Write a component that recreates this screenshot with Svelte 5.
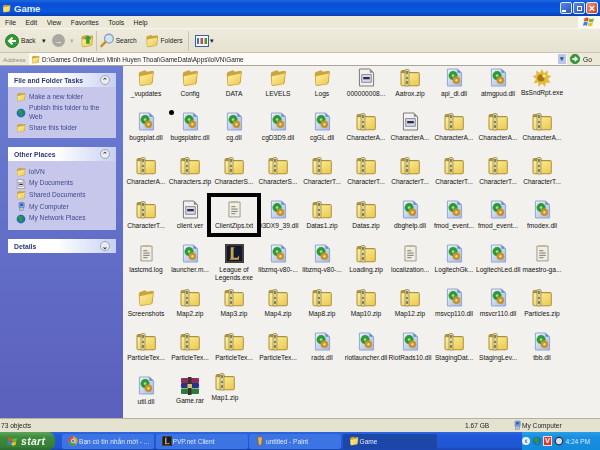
<script>
  const z = (n) => ({ n, t: 'zip' });
  const d = (n) => ({ n, t: 'dll' });
  const f = (n) => ({ n, t: 'folder' });
  const x = (n) => ({ n, t: 'txt' });
  const i = (n) => ({ n, t: 'ini' });
  const files = [
    f('_vupdates'), f('Config'), f('DATA'), f('LEVELS'), f('Logs'), i('000000008...'), z('Aatrox.zip'), d('api_dl.dll'), d('atmgpud.dll'), { n: 'BsSndRpt.exe', t: 'sun' },
    d('bugsplat.dll'), d('bugsplatrc.dll'), d('cg.dll'), d('cgD3D9.dll'), d('cgGL.dll'), z('CharacterA...'), i('CharacterA...'), z('CharacterA...'), z('CharacterA...'), z('CharacterA...'),
    z('CharacterA...'), z('Characters.zip'), z('CharacterS...'), z('CharacterS...'), z('CharacterT...'), z('CharacterT...'), z('CharacterT...'), z('CharacterT...'), z('CharacterT...'), z('CharacterT...'),
    z('CharacterT...'), i('client.ver'), x('ClientZips.txt'), d('D3DX9_39.dll'), z('Datas1.zip'), z('Datas.zip'), d('dbghelp.dll'), d('fmod_event...'), d('fmod_event...'), d('fmodex.dll'),
    x('lastcmd.log'), d('launcher.m...'), { n: 'League of Legends.exe', t: 'lol' }, d('libzmq-v80-...'), d('libzmq-v80-...'), z('Loading.zip'), x('localization...'), d('LogitechGk...'), d('LogitechLed.dll'), x('maestro-ga...'),
    f('Screenshots'), z('Map2.zip'), z('Map3.zip'), z('Map4.zip'), z('Map8.zip'), z('Map10.zip'), z('Map12.zip'), d('msvcp110.dll'), d('msvcr110.dll'), z('Particles.zip'),
    z('ParticleTex...'), z('ParticleTex...'), z('ParticleTex...'), z('ParticleTex...'), d('rads.dll'), d('riotlauncher.dll'), d('RiotRads10.dll'), z('StagingDat...'), z('StagingLev...'), d('tbb.dll'),
    d('util.dll'), { n: 'Game.rar', t: 'rar' }, { n: 'Map1.zip', t: 'zip', up: true }
  ];
  const menus = ['File', 'Edit', 'View', 'Favorites', 'Tools', 'Help'];
  const tasks = [
    { n: 'Make a new folder', t: 'folder' },
    { n: 'Publish this folder to the Web', t: 'globe' },
    { n: 'Share this folder', t: 'folder' }
  ];
  const places = [
    { n: 'lolVN', t: 'folder' },
    { n: 'My Documents', t: 'ini' },
    { n: 'Shared Documents', t: 'folder' },
    { n: 'My Computer', t: 'pc' },
    { n: 'My Network Places', t: 'globe' }
  ];
</script>

<svg class="defs" width="0" height="0" aria-hidden="true">
  <defs>
    <linearGradient id="fy" x1="0" y1="0" x2="1" y2="1"><stop offset="0" stop-color="#fdf0a0"/><stop offset="1" stop-color="#ecc850"/></linearGradient>
    <linearGradient id="pg" x1="0" y1="0" x2="1" y2="1"><stop offset="0" stop-color="#eef2fb"/><stop offset="1" stop-color="#a5b8e2"/></linearGradient>
    <symbol id="folder" viewBox="0 0 20 20">
      <path d="M4 3 L9 1.500 L11 3 L17 2 Q19 2 18.700 4 L17.500 15 Q17.200 17 15 17.200 L5 18.800 Q2.500 18.800 2.500 16 L2 5.500 Q2 3.500 4 3Z" fill="#c9a53c"/>
      <path d="M3.200 8 L17.800 5 L16.300 15 Q16 16.500 14.600 16.600 L5 17.800 Q3.400 17.900 3.300 16Z" fill="url(#fy)"/>
    </symbol>
    <symbol id="zip" viewBox="0 0 20 18">
      <path d="M.5 3 Q.5 1 2.500 1 L8 1 L10 3 L18 3 Q19.800 3 19.800 5 L19.800 15.500 Q19.800 17.300 18 17.300 L2.500 17.300 Q.5 17.300 .5 15.500Z" fill="#a8923c"/>
      <path d="M1.500 4.200 L18.800 4.200 L18.800 16.300 L1.500 16.300Z" fill="url(#fy)"/>
      <rect x="5" y="0.500" width="4" height="16.500" rx="1" fill="#e0d498" stroke="#85783c" stroke-width=".6"/>
      <path d="M7 2 V5 M7 8 V10 M7 12 V15" stroke="#5c5534" stroke-width="1.300"/>
    </symbol>
    <symbol id="dll" viewBox="0 0 18 20">
      <path d="M1.500 1 L12 1 L16.500 5 L16.500 19 L1.500 19Z" fill="url(#pg)" stroke="#8ea3cf" stroke-width="1"/>
      <path d="M12 1 L12 5 L16.500 5Z" fill="#6d8cc8"/>
      <circle cx="7.500" cy="8" r="4.800" fill="#2f9a34"/>
      <circle cx="7.500" cy="8" r="1.400" fill="#9fe09a"/>
      <circle cx="11" cy="13" r="4" fill="#c6922c"/>
      <circle cx="11" cy="13" r="1.300" fill="#f3dc8c"/>
    </symbol>
    <symbol id="ini" viewBox="0 0 18 20">
      <path d="M1.500 1 L12.500 1 L16.500 5 L16.500 19 L1.500 19Z" fill="#f2f1ee" stroke="#77736e" stroke-width="1"/>
      <path d="M12.500 1 L12.500 5 L16.500 5Z" fill="#8d8b8a"/>
      <rect x="4" y="7" width="10" height="8" fill="#d8d9e8" stroke="#6a6a80" stroke-width=".8"/>
      <rect x="5.500" y="9.500" width="7" height="2.400" fill="#2b2b44"/>
    </symbol>
    <symbol id="txt" viewBox="0 0 14 18">
      <path d="M1 1 L13 1 L13 17 L1 17Z" fill="#f0eee2" stroke="#9b9788" stroke-width="1"/>
      <path d="M3 1 H11" stroke="#c3b690" stroke-width="2"/>
      <path d="M3.500 6 H8 M3.500 8.500 H10.500 M3.500 11 H10.500 M3.500 13.500 H8" stroke="#77746c" stroke-width="1"/>
    </symbol>
    <symbol id="sun" viewBox="0 0 20 20">
      <path d="M10 1 L12 5 L16 2.500 L15.500 7 L19.500 8 L16 11 L18.500 15 L14 14.500 L13 19 L10 15.500 L6.500 19 L6 14.500 L1.500 15.500 L4 11 L.5 8 L4.500 7 L4 2.500 L8 5Z" fill="#e3bb3c"/>
      <circle cx="9" cy="10" r="3.500" fill="#a9741c"/>
      <circle cx="12" cy="8" r="1.600" fill="#fff1a6"/>
    </symbol>
    <symbol id="lol" viewBox="0 0 20 20">
      <rect width="20" height="20" fill="#10192f"/>
      <rect x="1" y="1" width="18" height="18" fill="none" stroke="#7b6a37" stroke-width="1"/>
      <path d="M6 3.500 H10 L9 5 V14.500 H13 L15 12 L14.500 16.500 H4.500 L6 15 V5Z" fill="#c8a24c"/>
    </symbol>
    <symbol id="rar" viewBox="0 0 20 18">
      <rect x="1" y="1" width="18" height="5" rx="1" fill="#8a2f55"/>
      <rect x="1" y="6" width="18" height="5" rx="1" fill="#24338c"/>
      <rect x="1" y="11.500" width="18" height="5.500" rx="1" fill="#2e7a3c"/>
      <rect x="8" y="0" width="3.500" height="18" fill="#3b3124"/>
      <rect x="7.500" y="7" width="4.500" height="4" fill="#d8bf6a"/>
    </symbol>
    <symbol id="globe" viewBox="0 0 16 16">
      <circle cx="8" cy="8" r="7" fill="#1a6fbf"/>
      <path d="M4 3 Q8 2 11 4 L10 7 L11 11 L7 14 L6 9 L3 7Z" fill="#2f9a34"/>
    </symbol>
    <symbol id="pc" viewBox="0 0 16 16">
      <rect x="5" y="1" width="8" height="8" rx="1" fill="#8eb0e0" stroke="#4b6ba8"/>
      <rect x="6.500" y="2.500" width="5" height="4" fill="#2f62c8"/>
      <rect x="6" y="9" width="6" height="5" fill="#b9c2d8" stroke="#6a7898" stroke-width=".7"/>
    </symbol>
    <symbol id="flag" viewBox="0 0 16 16">
      <path d="M2 3 Q5 1 7.500 3 L6.500 7.500 Q4 6 1 7.500Z" fill="#e0532e"/>
      <path d="M8.300 3.300 Q11 5 14.500 3 L13.500 7.500 Q10.500 9 7.500 7.800Z" fill="#6dbb3c"/>
      <path d="M1 8.300 Q4 7 6.300 8.300 L5.300 13 Q3 11.500 0 13Z" fill="#3b7fe0"/>
      <path d="M7.300 8.700 Q10 10 13.300 8.300 L12.300 13 Q9.500 14.500 6.300 13Z" fill="#f2c02e"/>
    </symbol>
    <symbol id="go" viewBox="0 0 14 14">
      <circle cx="7" cy="7" r="6.500" fill="#2e9b33" stroke="#1c6a20" stroke-width=".8"/>
      <path d="M3 7 H9 M6.500 3.800 L10 7 L6.500 10.200" fill="none" stroke="#fff" stroke-width="2"/>
    </symbol>
  </defs>
</svg>

<div class="win">
  <header class="title">
    <svg class="ti"><use href="#folder"/></svg>
    <span class="tt">Game</span>
    <div class="wbtns">
      <span class="wb"><i class="min"></i></span>
      <span class="wb"><i class="max"></i></span>
      <span class="wb close">×</span>
    </div>
  </header>

  <nav class="menu">
    {#each menus as m}<span>{m}</span>{/each}
    <div class="logo"><svg><use href="#flag"/></svg></div>
  </nav>

  <div class="tools">
    <svg class="round" viewBox="0 0 14 14"><g transform="matrix(-1 0 0 1 14 0)"><circle cx="7" cy="7" r="6.500" fill="#2e9b33" stroke="#1c6a20" stroke-width=".8"/><path d="M3 7 H9 M6.500 3.800 L10 7 L6.500 10.200" fill="none" stroke="#fff" stroke-width="2"/></g></svg>
    <span class="tl">Back</span><span class="caret">▾</span>
    <span class="fwd">→</span>
    <span class="caret dim">▾</span>
    <svg class="up" viewBox="0 0 16 16">
      <use href="#folder" width="16" height="16"/>
      <path d="M9 1 L13.500 6 L11 6 L11 11 L7 11 L7 6 L4.500 6Z" fill="#38a030"/>
    </svg>
    <span class="sep"></span>
    <svg class="search" viewBox="0 0 16 16">
      <circle cx="9.500" cy="6" r="4.700" fill="#cfe4f6" stroke="#8aa0b8" stroke-width="1.400"/>
      <path d="M6 9.500 L1.500 14" stroke="#c8902c" stroke-width="2.600" stroke-linecap="round"/>
    </svg>
    <span class="tl s">Search</span>
    <svg class="fold"><use href="#folder"/></svg>
    <span class="tl">Folders</span>
    <span class="sep two"></span>
    <svg class="views" viewBox="0 0 14 12">
      <rect x=".5" y=".5" width="13" height="11" fill="#f4f6fb" stroke="#3e5f9a"/>
      <path d="M2 3 H4 V9 H2Z" fill="#3d73c9"/>
      <path d="M5.500 3 H8 V9 H5.500Z" fill="#c9483a"/>
      <path d="M9.500 3 H12 V9 H9.500Z" fill="#3d9a45"/>
    </svg>
    <span class="caret v">▾</span>
  </div>

  <div class="addr">
    <span class="al">Address</span>
    <div class="input">
      <svg class="ai"><use href="#folder"/></svg>
      <span>D:\Games Online\Lien Minh Huyen Thoai\GameData\Apps\lolVN\Game</span>
      <b class="dd">▾</b>
    </div>
    <svg class="goi"><use href="#go"/></svg>
    <span class="gol">Go</span>
  </div>

  <div class="main">
    <aside class="side">
      <section class="pane">
        <h2>File and Folder Tasks<b>⌃</b></h2>
        <ul class="tasks">
          {#each tasks as t}
            <li><svg><use href="#{t.t}"/></svg><span>{t.n}</span></li>
          {/each}
        </ul>
      </section>
      <section class="pane">
        <h2>Other Places<b>⌃</b></h2>
        <ul class="places">
          {#each places as t}
            <li><svg><use href="#{t.t}"/></svg><span>{t.n}</span></li>
          {/each}
        </ul>
      </section>
      <section class="pane">
        <h2>Details<b>⌄</b></h2>
      </section>
    </aside>
    <div class="content">
      <div class="grid">
        {#each files as file}
          <div class="cell" class:up={file.up}>
            <svg class="ic {file.t}"><use href="#{file.t}"/></svg>
            <span class="lab">{file.n}</span>
          </div>
        {/each}
      </div>
      <span class="dot"></span>
      <span class="box"></span>
    </div>
  </div>

  <footer class="status">
    <span class="s1">73 objects</span>
    <span class="s2">1.67 GB</span>
    <span class="s3"><svg><use href="#pc"/></svg>My Computer</span>
  </footer>

  <div class="taskbar">
    <div class="start"><svg><use href="#flag"/></svg><em>start</em></div>
    <div class="tb">
      <svg viewBox="0 0 12 12"><circle cx="6" cy="6" r="5.500" fill="#d9a62e"/><path d="M6 .5 A5.500 5.500 0 0 0 1 8 L6 6Z" fill="#d4473a"/><path d="M1 8 A5.500 5.500 0 0 0 9 10.500 L6 6Z" fill="#3f9a45"/><circle cx="6" cy="6" r="2.300" fill="#4a86e0" stroke="#fff" stroke-width=".8"/></svg>
      <span>Bạn có tin nhắn mới - ...</span>
    </div>
    <div class="tb"><svg><use href="#lol"/></svg><span>PVP.net Client</span></div>
    <div class="tb"><svg viewBox="0 0 12 12"><path d="M3 1 H9 L8 11 H4Z" fill="#d8b36a" stroke="#8d5a2a"/></svg><span>untitled - Paint</span></div>
    <div class="tb active"><svg><use href="#folder"/></svg><span>Game</span></div>
    <div class="tray">
      <span class="chev">‹</span>
      <svg class="t1"><use href="#globe"/></svg>
      <span class="vee">V</span>
      <svg class="t1" viewBox="0 0 12 12"><circle cx="6" cy="6" r="4.500" fill="#d9dde6" stroke="#28304a" stroke-width="1.500"/></svg>
      <span class="clock">4:24 PM</span>
    </div>
  </div>
</div>

<style>
  :global(body) { margin: 0; background: #ece9d8; }
  .defs { position: absolute; }
  .win {
    width: 600px; height: 450px; overflow: hidden; display: flex; flex-direction: column;
    font-family: "Liberation Sans", Arial, sans-serif; font-size: 6.6px; color: #1c1c1c;
    filter: blur(0.35px); position: relative;
  }
  .title {
    height: 16px; flex: none; display: flex; align-items: center; padding: 0 2px;
    background: linear-gradient(#1c68dc, #0a4fd6 25%, #0858e0 70%, #0a3fb0);
  }
  .ti { width: 9px; height: 9px; margin-right: 3px; }
  .tt { color: #e6eefb; font-size: 9.500px; font-weight: 700; }
  .wbtns { margin-left: auto; display: flex; gap: 1px; }
  .wb {
    width: 12px; height: 12px; border: 1px solid #dfe8f8; border-radius: 2px; box-sizing: border-box;
    background: linear-gradient(135deg, #5a86e6, #2a55c4); display: flex; align-items: center; justify-content: center;
    color: #fff; font-weight: 700; font-size: 11px; line-height: 1;
  }
  .wb.close { background: linear-gradient(135deg, #ea9278, #cc3e18); }
  .min { width: 4px; height: 2px; background: #fff; margin: 5px 4px 0 0; }
  .max { width: 5px; height: 5px; border: 1px solid #fff; box-sizing: border-box; }
  .menu {
    height: 13px; flex: none; display: flex; align-items: center; padding-left: 5px; box-sizing: border-box;
    background: #ece9d8; border-bottom: 1px solid #f8f6ec; font-size: 6.800px;
  }
  .menu span { margin-right: 9.500px; }
  .logo { margin-left: auto; width: 22px; height: 12px; background: #fbfaf4; display: flex; align-items: center; justify-content: center; }
  .logo svg { width: 12px; height: 12px; }
  .tools {
    height: 24px; flex: none; display: flex; align-items: center; padding-left: 5px;
    background: linear-gradient(#eeebdd, #e6e2d0); border-bottom: 1px solid #c8c4b2; box-sizing: border-box;
  }
  .round { width: 14px; height: 14px; }
  .tl { margin-left: 2px; }
  .tl.s { margin-left: 1px; }
  .caret { font-size: 7px; margin-left: 6px; color: #222; }
  .caret.dim { color: #b5b2a6; margin-left: 5px; }
  .caret.v { margin-left: 1px; }
  .fwd {
    width: 13px; height: 13px; border-radius: 50%; background: #a9a89f; color: #f0eee6; margin-left: 6px; font-size: 9px;
    display: flex; align-items: center; justify-content: center; font-weight: 700;
  }
  .up { width: 14px; height: 14px; margin-left: 6px; }
  .sep { width: 1px; height: 20px; background: #c9c5b3; margin: 0 3px 0 2px; }
  .sep.two { margin: 0 6px 0 5px; }
  .search { width: 15px; height: 15px; }
  .fold { width: 14px; height: 14px; margin-left: 8px; }
  .views { width: 14px; height: 12px; }
  .addr {
    height: 13px; flex: none; display: flex; align-items: center; background: #ece9d8; padding-left: 3px;
    border-bottom: 1px solid #aaa79a; box-sizing: border-box;
  }
  .al { color: #8d8b80; width: 26px; font-size: 6.200px; }
  .input {
    width: 538px; height: 12px; background: #fbfaf6; display: flex; align-items: center; padding-left: 2px;
    box-sizing: border-box; font-size: 6.400px; gap: 2px; position: relative;
  }
  .ai { width: 9px; height: 9px; }
  .dd {
    position: absolute; right: 1px; top: 1px; width: 8px; height: 10px; background: #bcc8ea; font-size: 7px; line-height: 10px;
    text-align: center; color: #35508a;
  }
  .goi { width: 10px; height: 10px; margin-left: 3px; }
  .gol { margin-left: 3px; }
  .main { flex: 1; display: flex; min-height: 0; }
  .side {
    width: 123px; flex: none; background: linear-gradient(#6a7dd2, #5a60bc); padding: 7px 7px 0 8px; box-sizing: border-box;
    display: flex; flex-direction: column; gap: 9px;
  }
  .pane { background: #c6c7ea; }
  .pane h2 {
    margin: 0; height: 14px; display: flex; align-items: center; justify-content: space-between; padding: 0 6px;
    font-size: 6.800px; font-weight: 700; color: #2d3a72; background: linear-gradient(90deg, #fff 45%, #c7d0f2);
  }
  .pane h2 b {
    width: 8px; height: 8px; background: #eceaf4; border-radius: 50%; border: 1px solid #9aa; font-size: 7px; line-height: 9px; text-align: center;
    color: #333;
  }
  .pane ul { margin: 0; list-style: none; padding: 5px 8px 0 8px; box-sizing: border-box; display: flex; flex-direction: column; }
  .pane li { display: flex; color: #3e4a8e; font-size: 6.600px; line-height: 8.500px; gap: 3px; }
  .tasks { height: 51px; }
  .tasks li { margin-bottom: 2px; min-height: 10px; align-items: center; }
  .places { height: 69px; padding-top: 5px; }
  .places li { height: 11.700px; align-items: center; flex: none; }
  .pane li svg { width: 10px; height: 10px; flex: none; }
  .content { flex: 1; background: #f3f1ed; position: relative; overflow: hidden; padding-left: 1px; }
  .grid { display: grid; grid-template-columns: repeat(10, 44px); grid-auto-rows: 44px; }
  .cell { display: flex; flex-direction: column; align-items: center; padding-top: 2px; box-sizing: border-box; height: 44px; }
  .cell.up { margin-top: -4px; }
  .ic { height: 20px; width: 20px; flex: none; }
  .ic.folder { width: 18px; height: 18px; margin: 1px 0 2px; }
  .ic.zip { width: 20px; height: 18px; margin: 1px 0 2px; }
  .ic.dll { width: 17px; height: 19px; margin: 0 0 2px; }
  .ic.ini { width: 17px; height: 19px; margin: 0 0 2px; }
  .ic.txt { width: 13px; height: 17px; margin: 1px 0 3px; }
  .ic.lol { width: 19px; height: 19px; margin: 0 0 2px; }
  .lab {
    display: block; width: 44px; text-align: center; font-size: 6.600px; line-height: 8px; color: #111; flex: none; margin-top: 1px;
  }
  .dot { position: absolute; left: 46px; top: 44px; width: 5px; height: 5px; background: #000; border-radius: 50%; }
  .box { position: absolute; left: 84px; top: 127px; width: 46px; height: 36px; border: 4px solid #000; }
  .status {
    height: 14px; flex: none; display: flex; align-items: center; background: #e6e2d0;
    border-top: 1px solid #b5b1a1; box-sizing: border-box;
  }
  .s1 { margin-left: 1px; width: 464px; }
  .s2 { width: 47px; }
  .s3 { display: flex; align-items: center; }
  .s3 svg { width: 10px; height: 11px; }
  .taskbar {
    height: 18px; flex: none; display: flex; background: linear-gradient(#2f67e0, #2158d8 20%, #1f56d2 85%, #1a44ac);
    color: #dfe9fb; align-items: center;
  }
  .start {
    width: 55px; height: 18px; background: linear-gradient(#5ea65a, #3c8a3c 30%, #387f38 80%, #2a6a30); border-radius: 0 7px 7px 0;
    display: flex; align-items: center; gap: 3px; padding-left: 7px; box-sizing: border-box; margin-right: 7px;
  }
  .start svg { width: 11px; height: 11px; }
  .start em { color: #f2f6ec; font-size: 10.500px; font-weight: 700; letter-spacing: .03em; }
  .tb {
    width: 92px; height: 15px; background: #3d74e4; border-radius: 2px; display: flex; align-items: center; padding-left: 6px; gap: 1px;
    box-sizing: border-box; margin-right: 1.500px; white-space: nowrap; overflow: hidden; flex: none;
  }
  .tb svg { width: 10px; height: 10px; flex: none; }
  .tb.active { background: #1c46a8; width: 94px; }
  .tray {
    margin-left: auto; width: 78px; height: 18px; background: linear-gradient(#26a0e8, #1a8ee0 30%, #128bdc); display: flex; align-items: center;
    box-sizing: border-box; gap: 1px;
  }
  .chev {
    width: 8px; height: 8px; background: #eaf2fb; border-radius: 50%; color: #2458c0; font-weight: 700; display: flex; align-items: center; justify-content: center;
    font-size: 9px;
  }
  .t1 { width: 10px; height: 10px; margin-left: 1px; }
  .vee { width: 9px; height: 10px; background: #d8382c; color: #fff; font-weight: 700; font-size: 7.500px; text-align: center; line-height: 8px; border: 1px solid #f2dada; box-sizing: border-box; }
  .clock { margin-left: auto; margin-right: 10px; color: #dbeaf8; white-space: nowrap; }
</style>
